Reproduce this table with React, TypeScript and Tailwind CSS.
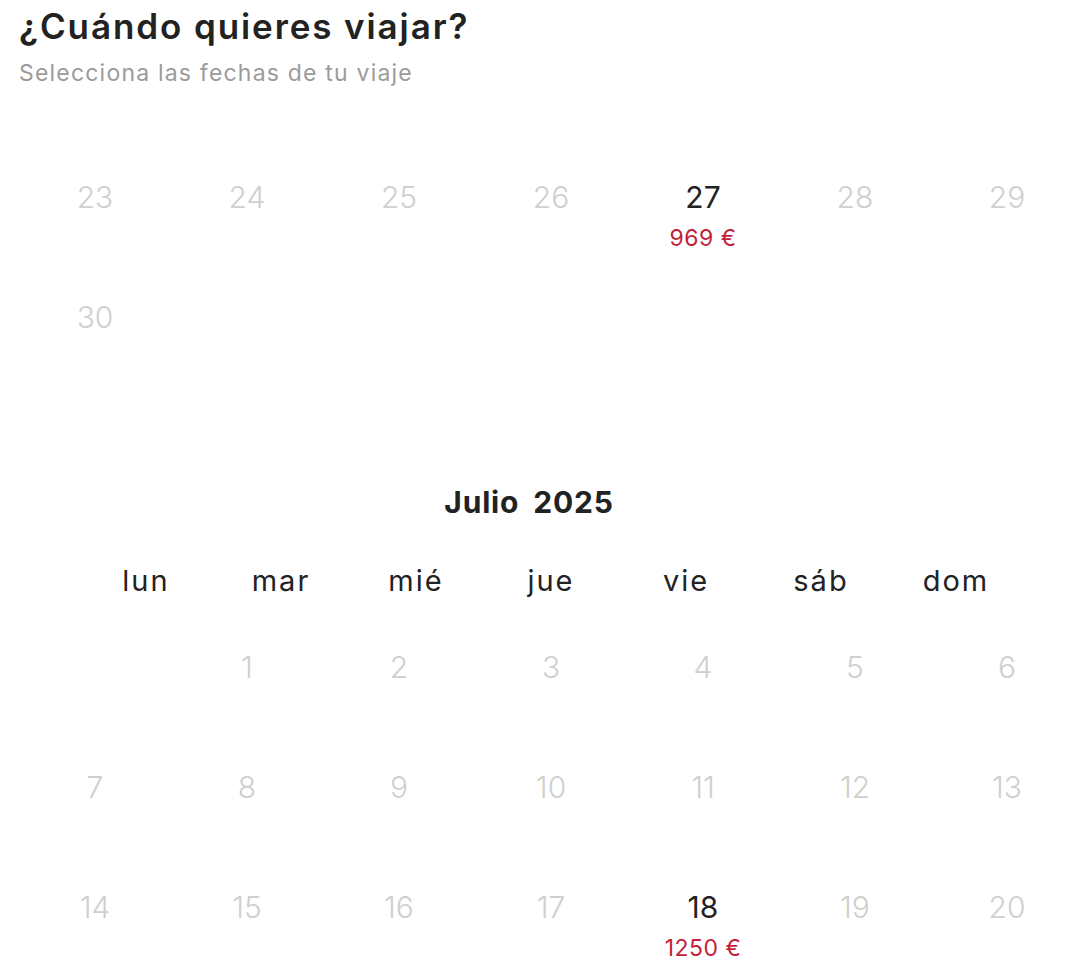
const june = [
  { d: 23 },
  { d: 24 },
  { d: 25 },
  { d: 26 },
  { d: 27, price: "969 €" },
  { d: 28 },
  { d: 29 },
  { d: 30 },
]

const weekdays = ["lun", "mar", "mié", "jue", "vie", "sáb", "dom"]

const july: ({ d: number; price?: string } | null)[] = [
  null,
  { d: 1 },
  { d: 2 },
  { d: 3 },
  { d: 4 },
  { d: 5 },
  { d: 6 },
  { d: 7 },
  { d: 8 },
  { d: 9 },
  { d: 10 },
  { d: 11 },
  { d: 12 },
  { d: 13 },
  { d: 14 },
  { d: 15 },
  { d: 16 },
  { d: 17 },
  { d: 18, price: "1250 €" },
  { d: 19 },
  { d: 20 },
]

function DayCell({ day }: { day: { d: number; price?: string } | null }) {
  if (!day) return <div className="h-[120px]" />
  const active = !!day.price
  return (
    <div className="h-[120px] flex flex-col items-center">
      <span className={`text-[30px] leading-[40px] ${active ? "text-[#222222] font-normal" : "text-[#cfcfcf] font-light"}`}>{day.d}</span>
      {day.price && <span className="mt-[6px] text-[23px] leading-[30px] tracking-[0.5px] text-[#c21f38]">{day.price}</span>}
    </div>
  )
}

export default function App() {
  return (
    <div className="bg-white min-h-screen pl-[19px] font-['Inter',sans-serif] overflow-hidden">
      <h1 className="mt-[4px] text-[35px] leading-[44px] font-semibold tracking-[1.9px] text-[#222222]">¿Cuándo quieres viajar?</h1>
      <p className="mt-[10px] text-[23px] leading-[30px] tracking-[1.2px] text-[#9b9b9b]">Selecciona las fechas de tu viaje</p>

      <div className="mt-[89px] grid grid-cols-7 w-[1064px]">
        {june.map((day) => (
          <DayCell key={day.d} day={day} />
        ))}
      </div>

      <div className="w-[1064px]">
        <div className="mt-[65px] pr-[44px] flex justify-center gap-[14px] text-[30px] leading-[40px] font-bold tracking-[0.8px] text-[#222222]">
          <span>Julio</span>
          <span>2025</span>
        </div>
        <div className="mt-[39px] mx-auto w-[945px] grid grid-cols-7">
          {weekdays.map((w) => (
            <span key={w} className="text-center text-[29px] leading-[40px] tracking-[2px] text-[#222222]">
              {w}
            </span>
          ))}
        </div>
      </div>

      <div className="mt-[46px] grid grid-cols-7 w-[1064px]">
        {july.map((day, i) => (
          <DayCell key={i} day={day} />
        ))}
      </div>
    </div>
  )
}
